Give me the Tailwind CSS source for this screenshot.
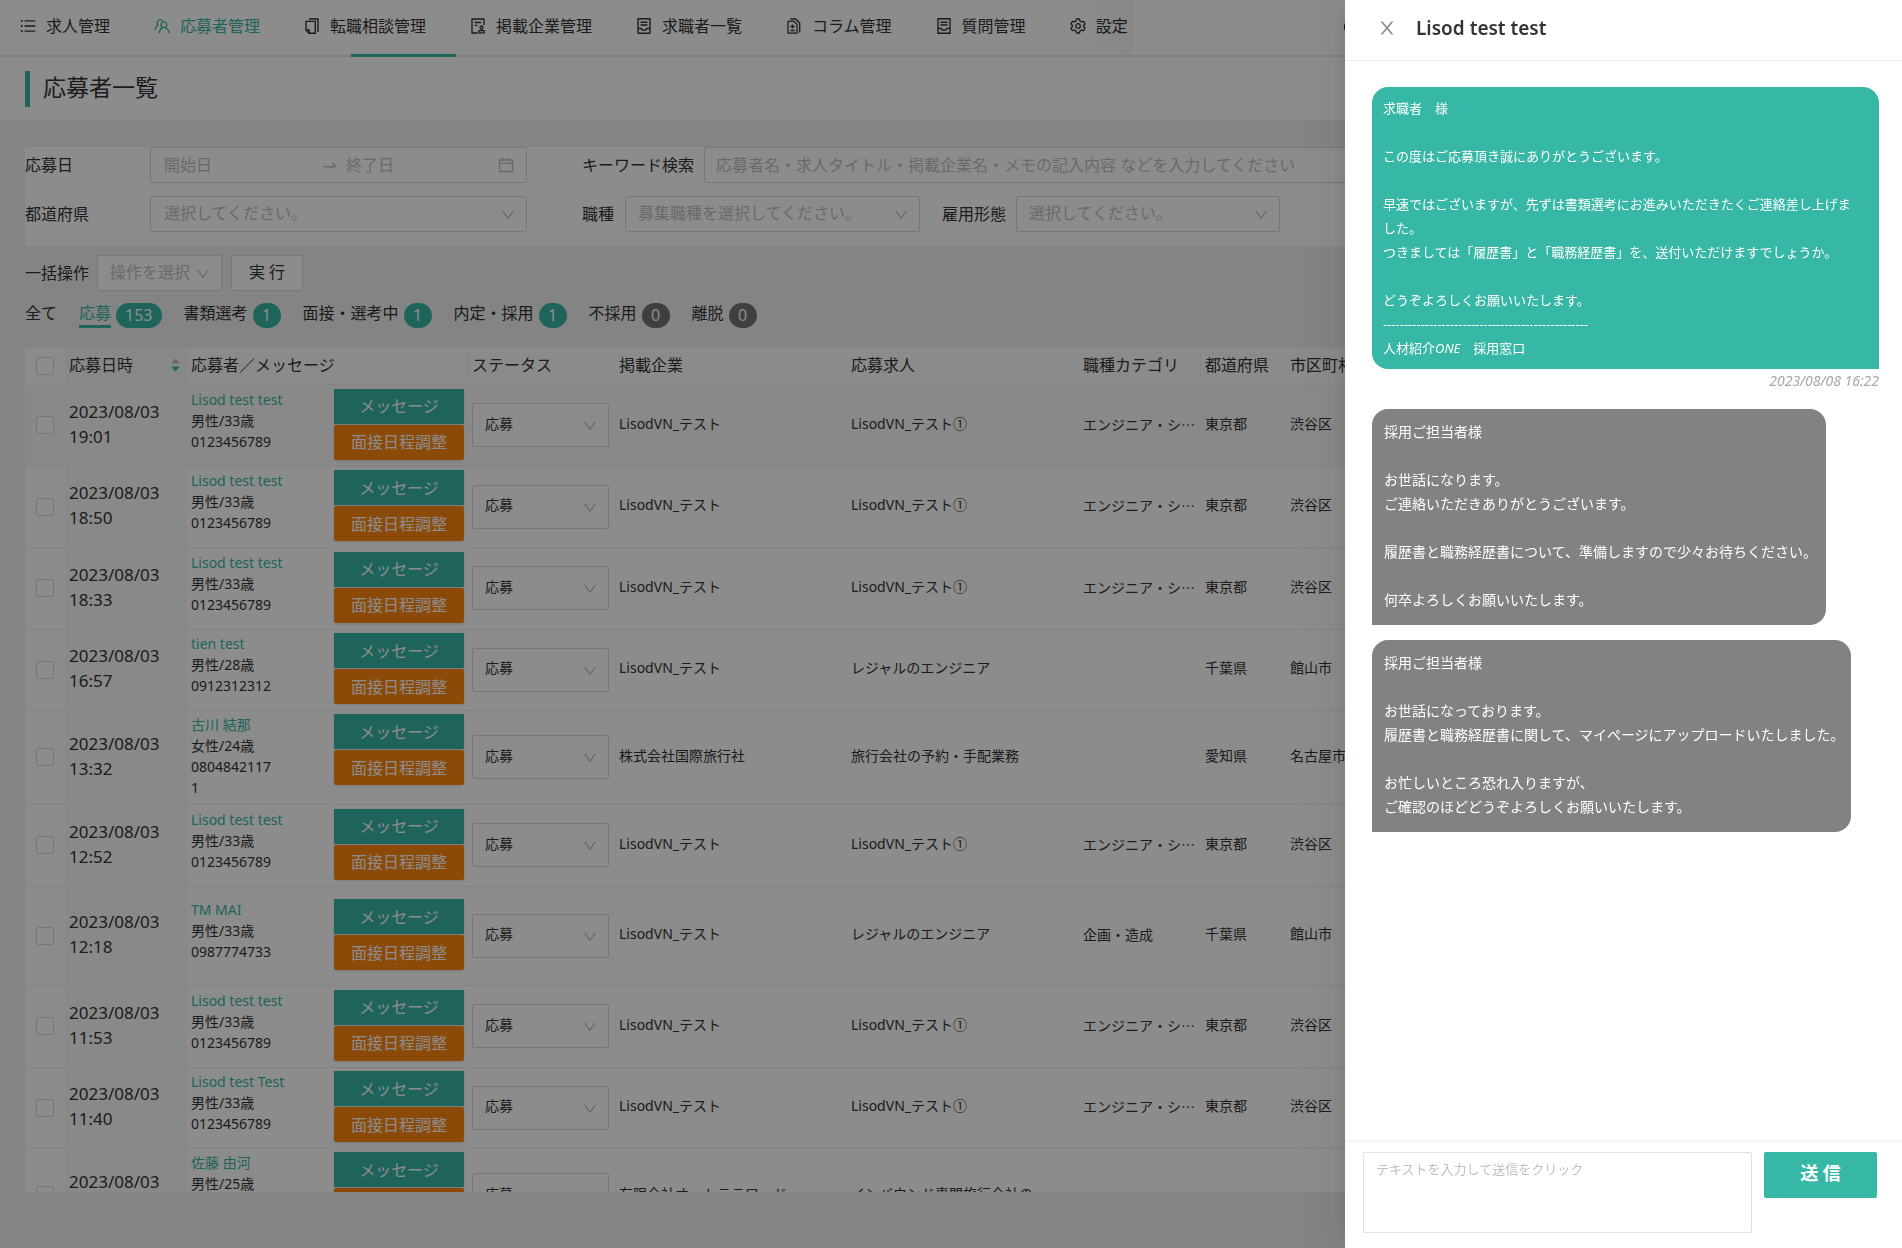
<!DOCTYPE html>
<html lang="ja">
<head>
    <meta charset="UTF-8">
    <meta name="viewport" content="width=device-width, initial-scale=1.0">
    <title>応募者一覧</title>
    <script src="https://cdn.jsdelivr.net/npm/@tailwindcss/browser@4"></script>
</head>
<body class="h-screen overflow-hidden bg-[#f0f0f0] font-['Noto_Sans','Noto_Sans_CJK_JP',sans-serif] text-base leading-6 text-[#333]">
    <svg class="hidden">
        <symbol id="down" viewBox="64 64 896 896"><path d="M884 256h-75c-5.1 0-9.9 2.5-12.9 6.6L512 654.2 227.9 262.6c-3-4.1-7.8-6.6-12.9-6.6h-75c-6.5 0-10.3 7.4-6.5 12.7l352.6 486.1c12.8 17.6 39 17.6 51.7 0l352.6-486.1c3.9-5.3.1-12.7-6.4-12.7z"/></symbol>
    </svg>

    <div class="flex h-full flex-col pb-14">
        <!-- ナビゲーション -->
        <header class="flex h-[57px] shrink-0 border-b-2 border-[#e8e8e8] bg-white">
            <nav class="relative flex h-[55px] items-center gap-11 whitespace-nowrap pb-1 pl-5 pr-[5px]">
                <a href="#" class="flex items-center gap-[10px]">
                    <svg class="size-4" viewBox="64 64 896 896" fill="currentColor"><path d="M912 192H328c-4.4 0-8 3.6-8 8v56c0 4.4 3.6 8 8 8h584c4.4 0 8-3.6 8-8v-56c0-4.4-3.6-8-8-8zm0 284H328c-4.4 0-8 3.6-8 8v56c0 4.4 3.6 8 8 8h584c4.4 0 8-3.6 8-8v-56c0-4.4-3.6-8-8-8zm0 284H328c-4.4 0-8 3.6-8 8v56c0 4.4 3.6 8 8 8h584c4.4 0 8-3.6 8-8v-56c0-4.4-3.6-8-8-8zM104 228a56 56 0 10112 0 56 56 0 10-112 0zm0 284a56 56 0 10112 0 56 56 0 10-112 0zm0 284a56 56 0 10112 0 56 56 0 10-112 0z"/></svg>
                    求人管理
                </a>
                <a href="#" class="flex items-center gap-[10px] text-[#37b7a5]">
                    <svg class="size-4" viewBox="0 0 16 16" fill="none" stroke="currentColor" stroke-width="1.3" stroke-linecap="round"><path d="M8.2 2.6a3 3 0 1 0-4 4.6M4.2 7.2C2.4 8 1.3 9.400 1 11.600"/><circle cx="9.8" cy="6.800" r="2.900"/><path d="M5.300 14.800c.2-2.800 1.500-4.300 3.200-5M11 9.700c2.400.9 3.800 2.500 4.100 5.100"/></svg>
                    応募者管理
                </a>
                <a href="#" class="flex items-center gap-[10px]">
                    <svg class="size-4" viewBox="0 0 16 16" fill="none" stroke="currentColor" stroke-width="1.4"><path d="M5 1h9v13"/><path d="M2 3.400h9.300v11.800H5L2 12.300z"/><path d="M2 12h3.200v3"/></svg>
                    転職相談管理
                </a>
                <a href="#" class="flex items-center gap-[10px]">
                    <svg class="size-4" viewBox="0 0 16 16" fill="none" stroke="currentColor" stroke-width="1.300"><path d="M7.500 15H2V1h12v6M4.500 4.500h6.500M4.500 7.300h3"/><circle cx="11.500" cy="9.500" r="1.500"/><path d="M11.500 11v1.300M8.800 12.700h5.400v2.200H8.800z"/></svg>
                    掲載企業管理
                </a>
                <a href="#" class="flex items-center gap-[10px]">
                    <svg class="size-4" viewBox="0 0 16 16" fill="none" stroke="currentColor" stroke-width="1.400"><path d="M2 .8h12v14.400H2zM4.500 4.200h7M4.500 7h7M2 10.500h3.200a2.900 2.300 0 0 0 5.600 0H14"/></svg>
                    求職者一覧
                </a>
                <a href="#" class="flex items-center gap-[10px]">
                    <svg class="size-4" viewBox="0 0 16 16" fill="none" stroke="currentColor" stroke-width="1.300"><path d="M2 3.300h6l3 3v8.900H2zM4.300 1h5.400l4 4v9.500M6.500 6.500v4M4.500 8.500h4M4.500 12.500h4"/></svg>
                    コラム管理
                </a>
                <a href="#" class="flex items-center gap-[10px]">
                    <svg class="size-4" viewBox="0 0 16 16" fill="none" stroke="currentColor" stroke-width="1.400"><path d="M2 .8h12v14.400H2zM4.500 4.200h7M4.500 7h7M2 10.500h3.200a2.900 2.300 0 0 0 5.600 0H14"/></svg>
                    質問管理
                </a>
                <a href="#" class="flex items-center gap-[10px]">
                    <svg class="size-4" viewBox="0 0 16 16" fill="none" stroke="currentColor" stroke-width="1.300" stroke-linejoin="round"><path d="M6.500 1h3l.5 2 1.600.9 2-.6 1.500 2.600L13.600 7.300v1.400l1.500 1.400-1.500 2.600-2-.6-1.600.9-.5 2h-3l-.5-2-1.600-.9-2 .6L.9 10.100l1.500-1.400V7.300L.9 5.900l1.500-2.600 2 .6L6 3z"/><circle cx="8" cy="8" r="2.300"/></svg>
                    設定
                </a>
                <span class="absolute left-[351px] top-[54px] h-[3px] w-[105px] bg-[#37b7a5]"></span>
                <span class="absolute right-0 top-0 h-[54px] w-12 bg-linear-to-r from-transparent to-black/4"></span>
            </nav>
        </header>

        <div class="flex h-[63px] shrink-0 items-center bg-white pl-[25px]">
            <h1 class="border-l-[5px] border-[#37b7a5] pb-1 pl-[13px] text-[23px] leading-8">応募者一覧</h1>
        </div>

        <main class="flex min-h-0 grow flex-col pl-[25px]">
            <!-- 検索条件 -->
            <form class="mt-[27px] flex h-[99px] shrink-0 flex-col gap-[13px] bg-white">
                <div class="flex items-center">
                    <label for="dateFrom" class="w-[125px] shrink-0">応募日</label>
                    <div class="flex h-9 w-[377px] shrink-0 items-center rounded-xs border border-[#d9d9d9] pl-[13px] pr-3">
                        <input id="dateFrom" type="text" class="w-[158px] placeholder:text-[#bfbfbf]" placeholder="開始日">
                        <svg class="size-4" viewBox="64 64 896 896" fill="#bfbfbf"><path d="M873.1 596.2l-164-208A32 32 0 00684 376h-64.8c-6.700 0-10.400 7.700-6.300 13l144.300 183H152c-4.400 0-8 3.600-8 8v60c0 4.400 3.600 8 8 8h695.900c26.800 0 41.700-30.800 25.200-51.800z"/></svg>
                        <input type="text" aria-label="終了日" class="ml-2 w-0 grow placeholder:text-[#bfbfbf]" placeholder="終了日">
                        <svg class="size-4" viewBox="64 64 896 896" fill="#bfbfbf"><path d="M880 184H712v-64c0-4.400-3.600-8-8-8h-56c-4.400 0-8 3.600-8 8v64H384v-64c0-4.400-3.600-8-8-8h-56c-4.400 0-8 3.600-8 8v64H144c-17.700 0-32 14.300-32 32v664c0 17.700 14.300 32 32 32h736c17.700 0 32-14.300 32-32V216c0-17.700-14.300-32-32-32zm-40 656H184V460h656v380zM184 392V256h128v48c0 4.400 3.600 8 8 8h56c4.400 0 8-3.600 8-8v-48h256v48c0 4.400 3.600 8 8 8h56c4.400 0 8-3.600 8-8v-48h128v136H184z"/></svg>
                    </div>
                    <label for="keyword" class="ml-[55px] w-[122px] shrink-0">キーワード検索</label>
                    <input id="keyword" type="text" class="h-9 grow rounded-xs border border-[#d9d9d9] px-[11px] placeholder:text-[#bfbfbf]" placeholder="応募者名・求人タイトル・掲載企業名・メモの記入内容 などを入力してください">
                </div>
                <div class="flex items-center">
                    <label for="prefecture" class="w-[125px] shrink-0">都道府県</label>
                    <div class="relative w-[377px]">
                        <select id="prefecture" class="block h-9 w-full appearance-none rounded-xs border border-[#d9d9d9] px-[13px] pb-[2px] text-[#bfbfbf]"><option>選択してください。</option></select>
                        <svg class="pointer-events-none absolute right-3 top-3 size-[14px]" fill="#bfbfbf"><use href="#down"/></svg>
                    </div>
                    <label for="jobType" class="ml-[55px] w-[43px]">職種</label>
                    <div class="relative w-[295px]">
                        <select id="jobType" class="block h-9 w-full appearance-none rounded-xs border border-[#d9d9d9] px-3 pb-[2px] text-[#bfbfbf]"><option>募集職種を選択してください。</option></select>
                        <svg class="pointer-events-none absolute right-3 top-3 size-[14px]" fill="#bfbfbf"><use href="#down"/></svg>
                    </div>
                    <label for="employment" class="ml-[22px] w-[74px]">雇用形態</label>
                    <div class="relative w-[264px]">
                        <select id="employment" class="block h-9 w-full appearance-none rounded-xs border border-[#d9d9d9] px-3 pb-[2px] text-[#bfbfbf]"><option>選択してください。</option></select>
                        <svg class="pointer-events-none absolute right-3 top-3 size-[14px]" fill="#bfbfbf"><use href="#down"/></svg>
                    </div>
                </div>
            </form>

            <!-- 一括操作 -->
            <div class="mt-[9px] flex shrink-0 items-center">
                <label for="bulk" class="w-[72px]">一括操作</label>
                <div class="relative w-[125px]">
                    <select id="bulk" class="block h-9 w-full appearance-none rounded-xs border border-[#d9d9d9] bg-white px-3 pb-[2px] text-[#bfbfbf]"><option>操作を選択</option></select>
                    <svg class="pointer-events-none absolute right-3 top-3 size-[14px]" fill="#bfbfbf"><use href="#down"/></svg>
                </div>
                <button class="ml-[9px] h-9 w-[72px] rounded-xs border border-[#d9d9d9] bg-white pb-[2px]">実 行</button>
            </div>

            <div id="tabs" class="mt-[10px] flex shrink-0 items-end gap-[22px]"></div>

            <!-- 応募者テーブル -->
            <div class="mt-[20px] min-h-0 grow overflow-hidden">
                <table class="w-full table-fixed border-collapse bg-white text-sm">
                    <colgroup>
                        <col class="w-10"><col class="w-[122px]"><col class="w-[280px]"><col class="w-[146px]"><col class="w-[232px]"><col class="w-[232px]"><col class="w-[123px]"><col class="w-[85px]"><col>
                    </colgroup>
                    <thead>
                        <tr class="h-9 border-b border-[#f0f0f0] bg-[#fdfdfd] text-left text-base">
                            <th class="pl-[11px]"><input type="checkbox" aria-label="全て選択" class="block size-[18px] appearance-none rounded-xs border border-[#d9d9d9] bg-white"></th>
                            <th class="bg-[#f7f7f7] px-1 pb-[2px] font-normal">
                                <div class="flex items-center justify-between pr-[3px]">応募日時
                                    <svg class="h-4 w-[9px]" viewBox="0 0 9 16"><path d="M4.500 1.500L8.700 6.500H.3z" fill="#bfbfbf"/><path d="M4.500 14.500L.3 9.500h8.400z" fill="#37b7a5"/></svg>
                                </div>
                            </th>
                            <th class="px-1 pb-[2px] font-normal">応募者／メッセージ</th>
                            <th class="pb-[2px] font-normal"><div class="border-l border-[#f0f0f0] pl-1">ステータス</div></th>
                            <th class="pb-[2px] font-normal"><div class="border-l border-[#f0f0f0] pl-[5px]">掲載企業</div></th>
                            <th class="pb-[2px] font-normal"><div class="border-l border-[#f0f0f0] pl-[5px]">応募求人</div></th>
                            <th class="pb-[2px] font-normal"><div class="border-l border-[#f0f0f0] pl-[5px]">職種カテゴリ</div></th>
                            <th class="pb-[2px] font-normal"><div class="border-l border-[#f0f0f0] pl-1">都道府県</div></th>
                            <th class="pb-[2px] font-normal"><div class="border-l border-[#f0f0f0] pl-1">市区町村</div></th>
                        </tr>
                    </thead>
                    <tbody id="rows"></tbody>
                </table>
            </div>
        </main>
    </div>

    <button aria-label="アカウント" class="absolute left-[1344px] top-[18px] size-[18px] rounded-full border-2 border-black"></button>

    <!-- メッセージドロワー -->
    <div class="fixed inset-0 bg-black/45"></div>
    <aside class="fixed inset-y-0 right-0 flex w-[557px] flex-col bg-white shadow-[-6px_0_16px_-8px_rgba(0,0,0,0.08),-9px_0_28px_0_rgba(0,0,0,0.05),-12px_0_48px_16px_rgba(0,0,0,0.03)]">
        <div class="flex h-[61px] shrink-0 items-center gap-5 border-b border-[#f0f0f0] pb-[5px] pl-[33px]">
            <button aria-label="閉じる"><svg class="size-[18px]" viewBox="64 64 896 896" fill="#8c8c8c"><path d="M563.800 512l262.500-312.900c4.400-5.200.7-13.100-6.100-13.100h-79.800c-4.700 0-9.200 2.100-12.300 5.700L511.600 449.800 295.100 191.700c-3-3.600-7.500-5.700-12.300-5.700H203c-6.800 0-10.500 7.900-6.100 13.100L459.400 512 196.900 824.900A7.950 7.950 0 00203 838h79.800c4.700 0 9.200-2.100 12.300-5.700l216.500-258.100 216.500 258.100c3 3.600 7.500 5.700 12.300 5.700h79.800c6.800 0 10.500-7.900 6.100-13.100L563.800 512z"/></svg></button>
            <h2 class="text-[19px] font-semibold">Lisod test test</h2>
        </div>

        <div class="flex grow flex-col items-start pl-[27px] pr-[23px] pt-[26px] text-white">
            <p class="w-full rounded-2xl rounded-br-none bg-[#37b7a5] py-[9px] pl-[11px] text-[13px]">
                求職者　様<br><br>
                この度はご応募頂き誠にありがとうございます。<br><br>
                早速ではございますが、先ずは書類選考にお進みいただきたくご連絡差し上げま<br>した。<br>
                つきましては「履歴書」と「職務経歴書」を、送付いただけますでしょうか。<br><br>
                どうぞよろしくお願いいたします。<br>
                -------------------------------------------------<br>
                人材紹介<i>ONE</i>　採用窓口
            </p>
            <time class="mt-[2px] self-end text-sm italic text-[#a6a6a6]">2023/08/08 16:22</time>
            <p class="mt-[18px] w-[454px] rounded-2xl rounded-bl-none bg-[#828282] pb-[13px] pl-3 pt-[11px] text-sm leading-6">
                採用ご担当者様<br><br>
                お世話になります。<br>
                ご連絡いただきありがとうございます。<br><br>
                履歴書と職務経歴書について、準備しますので少々お待ちください。<br><br>
                何卒よろしくお願いいたします。
            </p>
            <p class="mt-[15px] w-[479px] rounded-2xl rounded-bl-none bg-[#828282] pb-[13px] pl-3 pt-[11px] text-sm leading-6">
                採用ご担当者様<br><br>
                お世話になっております。<br>
                履歴書と職務経歴書に関して、マイページにアップロードいたしました。<br><br>
                お忙しいところ恐れ入りますが、<br>
                ご確認のほどどうぞよろしくお願いいたします。
            </p>
        </div>

        <form class="flex h-[108px] shrink-0 items-start gap-3 border-t-2 border-[#f5f5f5] pl-[18px] pr-[25px] pt-[10px]">
            <textarea aria-label="メッセージ" class="h-[81px] grow resize-none rounded-xs border border-[#e0e0e0] px-3 py-1 text-[13px] placeholder:text-[#bfbfbf]" placeholder="テキストを入力して送信をクリック"></textarea>
            <button type="button" class="h-[46px] w-[113px] rounded-xs bg-[#37b7a5] pb-[5px] text-lg font-bold text-white">送 信</button>
        </form>
    </aside>

    <script>
        const tabs = [
            { name: "全て" },
            { name: "応募", count: 153, active: true },
            { name: "書類選考", count: 1 },
            { name: "面接・選考中", count: 1 },
            { name: "内定・採用", count: 1 },
            { name: "不採用", count: 0 },
            { name: "離脱", count: 0 },
        ];

        const lisod = { name: "Lisod test test", profile: "男性/33歳", tel: "0123456789", company: "LisodVN_テスト", job: "LisodVN_テスト①", category: "エンジニア・シ…", pref: "東京都", city: "渋谷区" };
        const applicants = [
            { ...lisod, time: "19:01", height: "h-[82px]", hover: true },
            { ...lisod, time: "18:50", height: "h-[81px]" },
            { ...lisod, time: "18:33", height: "h-[82px]" },
            { ...lisod, time: "16:57", height: "h-[81px]", name: "tien test", profile: "男性/28歳", tel: "0912312312", job: "レジャルのエンジニア", category: "", pref: "千葉県", city: "館山市" },
            { time: "13:32", height: "h-[94px]", name: "古川 結那", profile: "女性/24歳", tel: "08048421171", company: "株式会社国際旅行社", job: "旅行会社の予約・手配業務", category: "", pref: "愛知県", city: "名古屋市" },
            { ...lisod, time: "12:52", height: "h-[82px]" },
            { ...lisod, time: "12:18", height: "h-[99px]", name: "TM MAI", tel: "0987774733", job: "レジャルのエンジニア", category: "企画・造成", pref: "千葉県", city: "館山市" },
            { ...lisod, time: "11:53", height: "h-[82px]" },
            { ...lisod, time: "11:40", height: "h-[81px]", name: "Lisod test Test" },
            { time: "11:22", height: "h-[94px]", name: "佐藤 由河", profile: "男性/25歳", tel: "08012345678", company: "有限会社オートテラワード", job: "インバウンド専門旅行会社の", category: "", pref: "", city: "" },
        ];

        document.getElementById("tabs").innerHTML = tabs.map(tab => `
            <a href="#" class="flex h-[27px] items-start gap-[5px]">
                <span class="${tab.active ? "border-b-[3px] border-[#37b7a5] text-[#37b7a5]" : ""}">${tab.name}</span>
                ${tab.count === undefined ? "" : `<span class="mt-[2px] h-[25px] min-w-7 rounded-full px-[9px] text-center leading-[25px] text-white ${tab.count ? "bg-[#37b7a5]" : "bg-[#737373]"}">${tab.count}</span>`}
            </a>`).join("");

        document.getElementById("rows").innerHTML = applicants.map(a => `
            <tr class="${a.height} border-b border-[#f0f0f0] ${a.hover ? "bg-[#fafafa]" : ""}">
                <td class="pl-[11px]"><input type="checkbox" aria-label="選択" class="block size-[18px] appearance-none rounded-xs border border-[#d9d9d9] bg-white"></td>
                <td class="bg-[#fafafa] px-1 pb-[3px] text-[17px] leading-[25px]">2023/08/03<br>${a.time}</td>
                <td class="pb-[2px] pl-1 pr-[3px]">
                    <div class="flex items-start justify-between leading-[21px]">
                        <div>
                            <a href="#" class="text-[#37b7a5]">${a.name}</a>
                            <p>${a.profile}</p>
                            <p class="w-[84px] break-all">${a.tel}</p>
                        </div>
                        <div class="flex w-[130px] flex-col gap-px text-base text-white">
                            <button class="h-[35px] bg-[#37b7a5] shadow-sm">メッセージ</button>
                            <button class="h-[35px] rounded-xs bg-[#ff880f] shadow-sm">面接日程調整</button>
                        </div>
                    </div>
                </td>
                <td class="pl-[5px] pr-1">
                    <div class="relative">
                        <select aria-label="ステータス" class="block h-11 w-full appearance-none rounded-xs border border-[#d9d9d9] bg-white px-3 pb-[3px]"><option>応募</option></select>
                        <svg class="pointer-events-none absolute right-3 top-4 size-[14px]" fill="#bfbfbf"><use href="#down"/></svg>
                    </div>
                </td>
                <td class="pb-[3px] pl-[6px]">${a.company}</td>
                <td class="pb-[3px] pl-[6px]">${a.job}</td>
                <td class="pb-[3px] pl-[6px] font-['Noto_Sans_CJK_JP',sans-serif]">${a.category}</td>
                <td class="pb-[3px] pl-[5px]">${a.pref}</td>
                <td class="pb-[3px] pl-[5px]">${a.city}</td>
            </tr>`).join("");
    </script>
</body>
</html>
